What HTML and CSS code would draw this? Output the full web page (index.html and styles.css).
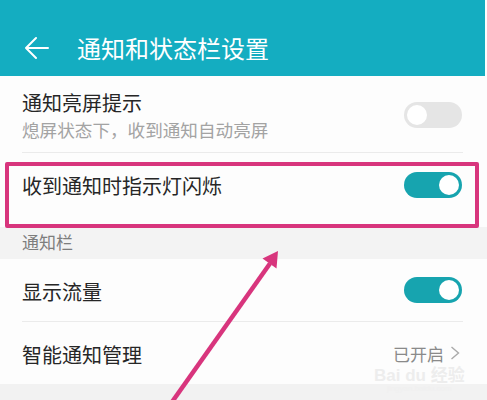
FILE: index.html
```html
<!DOCTYPE html>
<html lang="zh-CN">
<head>
<meta charset="utf-8">
<title>通知和状态栏设置</title>
<link rel="stylesheet" href="styles.css">
</head>
<body>
<div class="screen">
  <header class="header">
    <div class="status"></div>
    <div class="titlebar">
      <svg class="back" width="24" height="24" viewBox="0 0 24 24">
        <path d="M1 12 H23 M11 2 L1 12 L11 22" fill="none" stroke="#fff" stroke-width="2" stroke-linecap="round" stroke-linejoin="round"/>
      </svg>
      <span class="title">通知和状态栏设置</span>
    </div>
  </header>

  <div class="row row-two">
    <div class="texts">
      <div class="label">通知亮屏提示</div>
      <div class="sub">熄屏状态下，收到通知自动亮屏</div>
    </div>
    <span class="toggle off"><span class="knob"></span></span>
  </div>
  <div class="divider"></div>

  <div class="row row-flash">
    <div class="label">收到通知时指示灯闪烁</div>
    <span class="toggle on"><span class="knob"></span></span>
  </div>

  <div class="section">通知栏</div>

  <div class="row row-one">
    <div class="label">显示流量</div>
    <span class="toggle on"><span class="knob"></span></span>
  </div>
  <div class="divider"></div>

  <div class="row row-one row-last">
    <div class="label">智能通知管理</div>
    <span class="value">已开启
      <svg class="chev" width="10" height="14" viewBox="0 0 10 14">
        <path d="M1.5 1 L8.5 7 L1.5 13" fill="none" stroke="#aaa" stroke-width="1.4"/>
      </svg>
    </span>
  </div>
  <div class="footer"></div>

  <div class="highlight"></div>
  <svg class="arrow" width="487" height="400" viewBox="0 0 487 400">
    <line x1="172" y1="402" x2="270" y2="263.5" stroke="#d8357d" stroke-width="4.5"/>
    <polygon points="278,251 276.5,268.5 262.5,258.5" fill="#d8357d"/>
  </svg>
  <div class="watermark">
    <div class="wm-big">Bai du 经验</div>
    <div class="wm-small">jingyan.baidu.com</div>
  </div>
</div>
</body>
</html>
```

FILE: styles.css
```css
html, body {
  margin: 0;
  padding: 0;
  background: #fff;
}

.screen {
  position: relative;
  width: 487px;
  height: 400px;
  overflow: hidden;
  font-family: "Noto Sans CJK SC", "Noto Sans", sans-serif;
  background: #fdfdfd;
}

.header {
  background: #14adc1;
  height: 76px;
  margin-right: 2px;
}

.status {
  height: 20px;
}

.titlebar {
  height: 56px;
  display: flex;
  align-items: center;
  padding-left: 25px;
}

.back {
  display: block;
}

.title {
  margin-left: 28px;
  color: #fff;
  font-size: 24px;
  line-height: 30px;
}

.row {
  display: flex;
  align-items: center;
  justify-content: space-between;
  padding: 0 25px 0 22px;
  background: #fdfdfd;
}

.row-two {
  height: 76px;
  align-items: flex-start;
  padding-top: 13px;
  box-sizing: border-box;
}

.row-two .toggle {
  margin-top: 13px;
}

.label {
  font-size: 20px;
  line-height: 28px;
  color: #262626;
}

.sub {
  font-size: 17.6px;
  line-height: 26px;
  color: #a3a3a3;
}

.divider {
  height: 1px;
  background: #ebebeb;
  margin: 0 24px 0 22px;
}

.row-flash {
  height: 74px;
  align-items: flex-start;
  padding-top: 19px;
  box-sizing: border-box;
}

.section {
  height: 32px;
  background: #f3f3f3;
  padding-left: 22px;
  font-size: 17px;
  line-height: 30px;
  color: #7d7d7d;
}

.row-one {
  height: 62px;
}

.row-one .label {
  padding-top: 3px;
}

.value {
  display: flex;
  align-items: center;
  gap: 6px;
  font-size: 17px;
  color: #8a8a8a;
  margin-right: 2px;
}

.chev {
  display: block;
}

.footer {
  height: 20px;
  background: #f2f2f2;
}

.toggle {
  position: relative;
  width: 58px;
  height: 26px;
  border-radius: 13px;
  flex: none;
}

.toggle.on {
  background: #17a4af;
}

.toggle.off {
  background: #e5e5e5;
}

.knob {
  position: absolute;
  top: 3px;
  width: 20px;
  height: 20px;
  border-radius: 50%;
  background: #fff;
}

.toggle.on .knob {
  right: 3px;
}

.toggle.off .knob {
  left: 3px;
}

.highlight {
  position: absolute;
  left: 5px;
  top: 162px;
  width: 474px;
  height: 66px;
  border: 4px solid #d8357d;
  border-radius: 2px;
  box-sizing: border-box;
}

.arrow {
  position: absolute;
  left: 0;
  top: 0;
  pointer-events: none;
}

.watermark {
  position: absolute;
  left: 374px;
  top: 367px;
  text-align: center;
  font-family: "Liberation Sans", "Noto Sans CJK SC", sans-serif;
  color: #ededed;
}

.wm-big {
  font-size: 17px;
  line-height: 17px;
  font-weight: bold;
}

.wm-small {
  font-size: 8px;
  line-height: 10px;
  color: #f0f0f0;
}
```
